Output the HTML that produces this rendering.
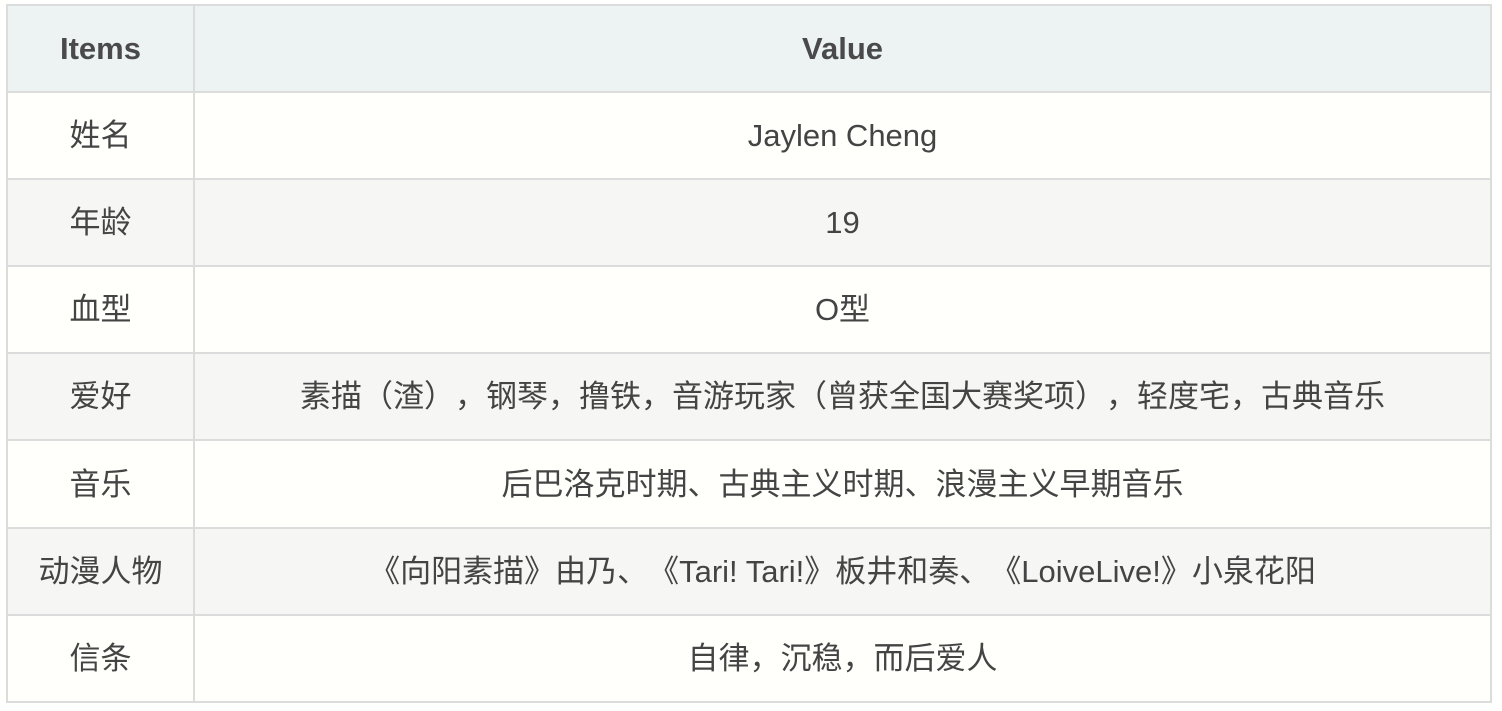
<!DOCTYPE html>
<html><head><meta charset="utf-8"><style>
html,body{margin:0;padding:0;background:#fffffd;width:1502px;height:711px;overflow:hidden}
table{position:absolute;left:6px;top:4px;width:1486px;border-collapse:collapse;font-family:"Liberation Sans","Noto Sans CJK SC",sans-serif;font-size:31px;color:#444;text-spacing-trim:space-all;font-feature-settings:"chws" 0,"halt" 0}
td,th{border:2px solid #dcdcdc;text-align:center;height:85.1px;padding:0;line-height:1}
th{background:#edf2f3;font-weight:bold;color:#4a4a4a}
tr.a td{background:#f6f7f5}
tr.b td{background:#fffffb}
td:first-child,th:first-child{width:185px}
</style></head><body>
<table>
<tr><th>Items</th><th>Value</th></tr>
<tr class="b"><td>姓名</td><td>Jaylen Cheng</td></tr>
<tr class="a"><td>年龄</td><td>19</td></tr>
<tr class="b"><td>血型</td><td>O型</td></tr>
<tr class="a"><td>爱好</td><td>素描（渣），钢琴，撸铁，音游玩家（曾获全国大赛奖项），轻度宅，古典音乐</td></tr>
<tr class="b"><td>音乐</td><td>后巴洛克时期、古典主义时期、浪漫主义早期音乐</td></tr>
<tr class="a"><td>动漫人物</td><td>《向阳素描》由乃、《Tari! Tari!》板井和奏、《LoiveLive!》小泉花阳</td></tr>
<tr class="b"><td>信条</td><td>自律，沉稳，而后爱人</td></tr>
</table>
</body></html>
